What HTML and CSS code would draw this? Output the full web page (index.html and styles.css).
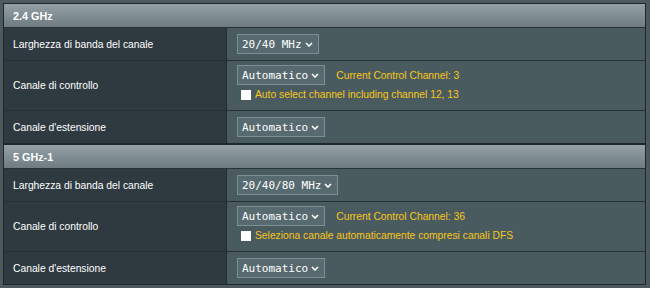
FILE: index.html
```html
<!DOCTYPE html>
<html lang="it">
<head>
<meta charset="utf-8">
<title>Wireless</title>
<link rel="stylesheet" href="styles.css">
</head>
<body>
<div class="page">
  <section class="band">
    <div class="band-head">2.4 GHz</div>
    <div class="row r1">
      <div class="label">Larghezza di banda del canale</div>
      <div class="value">
        <div class="select"><span>20/40 MHz</span><svg class="chev" width="8" height="5" viewBox="0 0 8 5"><polyline points="1,1 4,4 7,1" fill="none" stroke="#fff" stroke-width="1.6"/></svg></div>
      </div>
    </div>
    <div class="row r2">
      <div class="label">Canale di controllo</div>
      <div class="value stack">
        <div class="line">
          <div class="select"><span>Automatico</span><svg class="chev" width="8" height="5" viewBox="0 0 8 5"><polyline points="1,1 4,4 7,1" fill="none" stroke="#fff" stroke-width="1.6"/></svg></div>
          <span class="note">Current Control Channel: 3</span>
        </div>
        <label class="check"><span class="box"></span><span class="note">Auto select channel including channel 12, 13</span></label>
      </div>
    </div>
    <div class="row r3">
      <div class="label">Canale d'estensione</div>
      <div class="value">
        <div class="select"><span>Automatico</span><svg class="chev" width="8" height="5" viewBox="0 0 8 5"><polyline points="1,1 4,4 7,1" fill="none" stroke="#fff" stroke-width="1.6"/></svg></div>
      </div>
    </div>
  </section>
  <section class="band">
    <div class="band-head">5 GHz-1</div>
    <div class="row r1">
      <div class="label">Larghezza di banda del canale</div>
      <div class="value">
        <div class="select"><span>20/40/80 MHz</span><svg class="chev" width="8" height="5" viewBox="0 0 8 5"><polyline points="1,1 4,4 7,1" fill="none" stroke="#fff" stroke-width="1.6"/></svg></div>
      </div>
    </div>
    <div class="row r2">
      <div class="label">Canale di controllo</div>
      <div class="value stack">
        <div class="line">
          <div class="select"><span>Automatico</span><svg class="chev" width="8" height="5" viewBox="0 0 8 5"><polyline points="1,1 4,4 7,1" fill="none" stroke="#fff" stroke-width="1.6"/></svg></div>
          <span class="note">Current Control Channel: 36</span>
        </div>
        <label class="check"><span class="box"></span><span class="note">Seleziona canale automaticamente compresi canali DFS</span></label>
      </div>
    </div>
    <div class="row r3">
      <div class="label">Canale d'estensione</div>
      <div class="value">
        <div class="select"><span>Automatico</span><svg class="chev" width="8" height="5" viewBox="0 0 8 5"><polyline points="1,1 4,4 7,1" fill="none" stroke="#fff" stroke-width="1.6"/></svg></div>
      </div>
    </div>
  </section>
</div>
</body>
</html>
```
FILE: styles.css
```css
* { box-sizing: border-box; }

body {
  margin: 0;
  background: #4d595d;
  font-family: "Liberation Sans", Arial, sans-serif;
  font-size: 10.3px;
  color: #fff;
}

.page {
  display: flex;
  flex-direction: column;
  padding: 3px 4px 0 3px;
}

.band {
  border: 1px solid #1f272a;
}

.band-head {
  height: 24px;
  display: flex;
  align-items: center;
  padding-left: 9px;
  font-weight: bold;
  font-size: 10.8px;
  background: linear-gradient(#93a1a6, #6e7c82);
  border-bottom: 1px solid #283236;
}

.row {
  display: grid;
  grid-template-columns: 223px 1fr;
  border-bottom: 1px solid #263034;
}
.row.r3 { border-bottom: none; }
.r1 { height: 33px; }
.r2 { height: 50px; }
.r3 { height: 32px; }

.label {
  display: flex;
  align-items: center;
  padding-left: 9px;
  background: #2e3a3f;
  border-right: 1px solid #232c30;
}

.value {
  display: flex;
  align-items: center;
  padding-left: 10px;
  background: #4a5b60;
}

.value.stack {
  flex-direction: column;
  align-items: flex-start;
  justify-content: flex-start;
  padding-top: 4px;
}

.line {
  display: flex;
  align-items: center;
  gap: 11px;
}

.select {
  display: inline-flex;
  align-items: center;
  gap: 3px;
  height: 20px;
  padding: 0 5px 0 4px;
  background: #576a70;
  border: 1px solid #7f8e93;
  font-family: "DejaVu Sans Mono", "Liberation Mono", monospace;
  font-size: 11px;
  color: #fff;
}

.chev { display: block; }

.note {
  color: #f8c718;
}

.check {
  display: flex;
  align-items: center;
  margin-top: 4px;
  margin-left: 4px;
  gap: 4px;
}

.box {
  width: 10px;
  height: 10px;
  background: #fdfdfd;
}
```
